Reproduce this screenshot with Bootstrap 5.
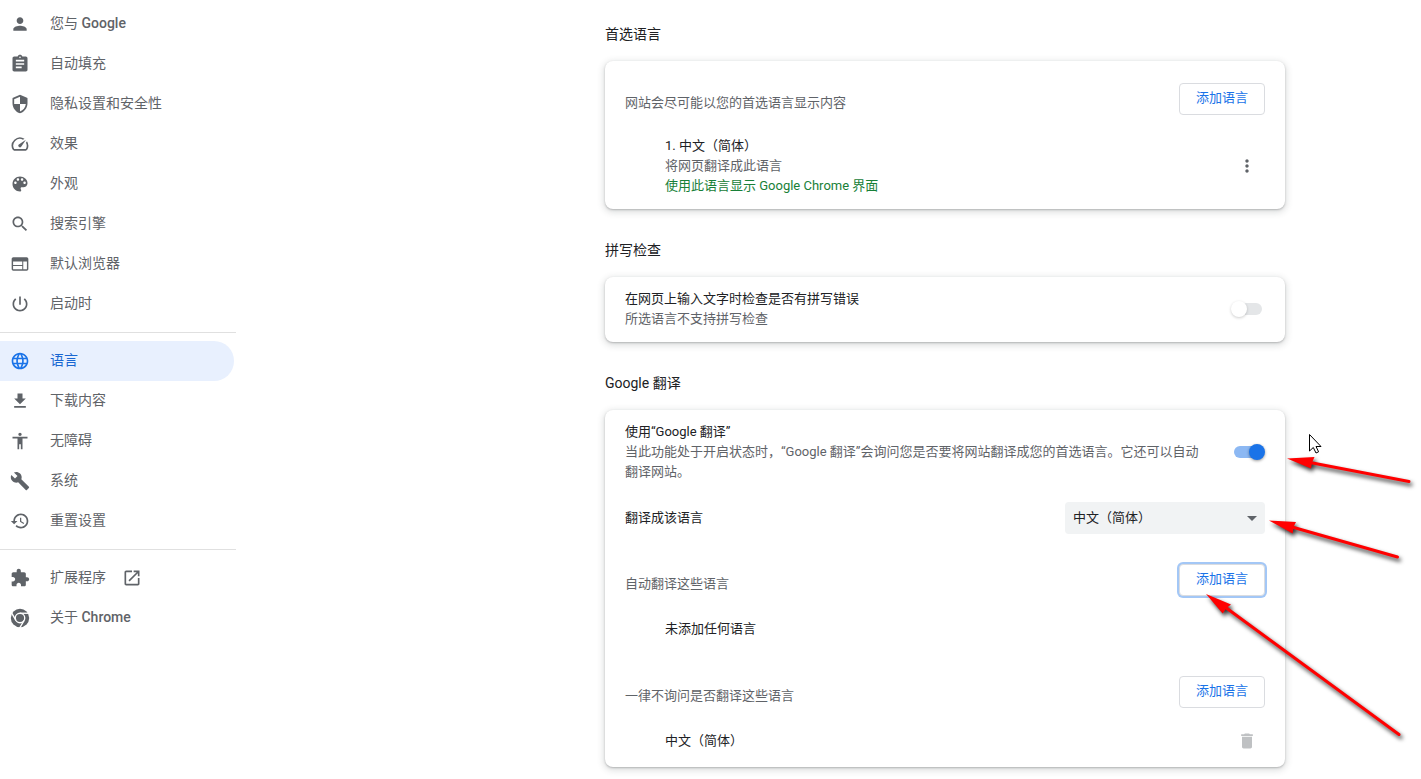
<!DOCTYPE html>
<html lang="zh-CN">
<head>
<meta charset="utf-8">
<meta name="viewport" content="width=device-width, initial-scale=1">
<title>设置 - 语言</title>
<link href="https://cdn.jsdelivr.net/npm/bootstrap@5.3.0/dist/css/bootstrap.min.css" rel="stylesheet">
<style>
  body { font-family: Roboto, "Noto Sans CJK SC", sans-serif; font-size: 13px; line-height: 20px; color: #202124; background: #fff; }
  .side-col { width: 469px; flex-shrink: 1; }
  .side-menu { width: 236px; padding-top: 4px; font-size: 14px; }
  .side-menu .nav-link { height: 40px; padding: 0 10px; gap: 20px; margin-right: 2px; color: #5f6368; border-radius: 0 20px 20px 0; }
  .side-menu .nav-link span { padding-bottom: 2px; }
  .side-menu .nav-link b { font-weight: 500; }
  .side-menu .nav-link.active { background: #e8f0fe; color: #1967d2; }
  .side-menu .nav-link.active svg { fill: #1a73e8; }
  .side-menu svg { width: 20px; height: 20px; fill: #5f6368; flex-shrink: 0; }
  .side-menu hr { margin: 8px 0; color: #000; opacity: .12; }
  .side-menu .open-new { margin-left: -4px; }
  .settings { max-width: 680px; padding-top: 24px; }
  .settings h2 { font-size: 14px; line-height: 20px; font-weight: 400; margin: 0; }
  .settings h2 + .card { margin-top: 17px; margin-bottom: 31px; }
  .settings .card { border: 0; border-radius: 8px; padding: 12px 20px 13px; color: #202124; box-shadow: 0 1px 2px rgba(60,64,67,.3), 0 2px 6px 2px rgba(60,64,67,.15); }
  .sub { color: #5f6368; }
  .in-use { color: #188038; }
  .list-head { height: 63px; padding-top: 10px; }
  .list-head .sub { padding-top: 6px; }
  .list-head.after-field { margin-top: 20px; }
  .list-entry { padding-left: 40px; padding-right: 8px; }
  .list-entry.single { padding-top: 2px; padding-bottom: 3px; }
  .btn-add { width: 86px; height: 32px; padding: 0 0 2px; font-size: 13px; line-height: 20px; color: #1a73e8; background: #fff; border: 1px solid #dadce0; border-radius: 4px; }
  .btn-add.focused { box-shadow: 0 0 0 2px rgba(26,115,232,.4); }
  .toggle { appearance: none; position: relative; flex-shrink: 0; width: 28px; height: 12px; margin: 0 3px; border-radius: 6px; background: #e4e6e8; }
  .toggle::before { content: ""; position: absolute; top: -2px; left: -3px; width: 16px; height: 16px; border-radius: 50%; background: #fff; box-shadow: 0 1px 3px rgba(0,0,0,.2); }
  .toggle:checked { background: #8cb8f3; }
  .toggle:checked::before { left: 15px; background: #1a73e8; box-shadow: 0 1px 3px rgba(0,0,0,.4); }
  .lang-select { width: 200px; height: 32px; padding: 0 24px 0 8px; font-size: 13px; line-height: 20px; color: #202124; border: 0; border-radius: 4px; background: #f1f3f4 url("data:image/svg+xml,%3Csvg xmlns='http://www.w3.org/2000/svg' viewBox='0 0 10 5'%3E%3Cpath d='M0 0h10L5 5z' fill='%235f6368'/%3E%3C/svg%3E") no-repeat right 8px center / 10px 5px; }
  .notes { top: 0; left: 0; width: 816px; height: 779px; pointer-events: none; }
  .notes .arrow { filter: drop-shadow(2px 3px 2px rgba(0,0,0,.8)); }
</style>
</head>
<body>
<div class="d-flex">
  <div class="side-col">
    <nav class="side-menu nav flex-column" aria-label="设置">
      <a class="nav-link d-flex align-items-center" href="#people"><svg viewBox="0 0 24 24"><path d="M12 12c2.210 0 4-1.790 4-4s-1.790-4-4-4-4 1.790-4 4 1.790 4 4 4zm0 2c-2.670 0-8 1.340-8 4v2h16v-2c0-2.660-5.330-4-8-4z"/></svg><span>您与 <b>Google</b></span></a>
      <a class="nav-link d-flex align-items-center" href="#autofill"><svg viewBox="0 0 24 24"><path d="M19 3h-4.180C14.400 1.840 13.300 1 12 1c-1.300 0-2.400.84-2.820 2H5c-1.100 0-2 .9-2 2v14c0 1.100.9 2 2 2h14c1.100 0 2-.9 2-2V5c0-1.100-.9-2-2-2zm-7 0c.55 0 1 .45 1 1s-.45 1-1 1-1-.45-1-1 .45-1 1-1zm2 14H7v-2h7v2zm3-4H7v-2h10v2zm0-4H7V7h10v2z"/></svg><span>自动填充</span></a>
      <a class="nav-link d-flex align-items-center" href="#privacy"><svg viewBox="0 0 24 24"><path d="M12 1L3.600 4.400Q3 4.700 3 5.400V11c0 5.550 3.840 10.740 9 12 5.160-1.260 9-6.450 9-12V5.400q0-.7-.6-1zm0 10.990h7c-.53 4.120-3.280 7.790-7 8.940V12H5V6.300l7-3.110v8.800z"/></svg><span>隐私设置和安全性</span></a>
      <a class="nav-link d-flex align-items-center" href="#performance"><svg viewBox="0 0 24 24"><path d="M20.380 8.570l-1.230 1.850a8 8 0 0 1-.22 7.580H5.070A8 8 0 0 1 15.580 6.850l1.850-1.230A10 10 0 0 0 3.350 19a2 2 0 0 0 1.720 1h13.850a2 2 0 0 0 1.740-1 10 10 0 0 0-.27-10.440zM10.590 15.410a2 2 0 0 0 2.830 0l5.660-8.490-8.490 5.660a2 2 0 0 0 0 2.830z"/></svg><span>效果</span></a>
      <a class="nav-link d-flex align-items-center" href="#appearance"><svg viewBox="0 0 24 24"><path d="M12 3c-4.970 0-9 4.030-9 9s4.030 9 9 9c.83 0 1.500-.67 1.500-1.500 0-.39-.15-.74-.39-1.010-.23-.26-.38-.61-.38-.99 0-.83.67-1.500 1.500-1.500H16c2.760 0 5-2.240 5-5 0-4.420-4.030-8-9-8zm-5.500 9c-.83 0-1.500-.67-1.500-1.500S5.670 9 6.500 9 8 9.670 8 10.500 7.330 12 6.500 12zm3-4C8.670 8 8 7.330 8 6.500S8.670 5 9.500 5s1.500.67 1.500 1.500S10.330 8 9.500 8zm5 0c-.83 0-1.500-.67-1.500-1.500S13.670 5 14.500 5s1.500.67 1.500 1.500S15.330 8 14.500 8zm3 4c-.83 0-1.500-.67-1.500-1.500S16.670 9 17.500 9s1.500.67 1.500 1.500-.67 1.500-1.500 1.500z"/></svg><span>外观</span></a>
      <a class="nav-link d-flex align-items-center" href="#search"><svg viewBox="0 0 24 24"><path d="M15.500 14h-.79l-.28-.27C15.410 12.590 16 11.110 16 9.500 16 5.910 13.090 3 9.500 3S3 5.910 3 9.500 5.910 16 9.500 16c1.610 0 3.090-.59 4.230-1.570l.27.28v.79l5 4.990L20.490 19l-4.990-5zm-6 0C7.010 14 5 11.990 5 9.500S7.010 5 9.500 5 14 7.010 14 9.500 11.990 14 9.500 14z"/></svg><span>搜索引擎</span></a>
      <a class="nav-link d-flex align-items-center" href="#browser"><svg viewBox="0 0 24 24"><path d="M20 4H4c-1.100 0-2 .9-2 2v12c0 1.100.9 2 2 2h16c1.100 0 2-.9 2-2V6c0-1.100-.9-2-2-2zm-5.300 14.400H3.700v-4h11v4zm0-5.200H3.700V9h11v4.200zm5.600 5.200h-4.400V9h4.400v9.400z"/></svg><span>默认浏览器</span></a>
      <a class="nav-link d-flex align-items-center" href="#startup"><svg viewBox="0 0 24 24"><path d="M13 3h-2v10h2V3zm4.830 2.170l-1.420 1.420C17.990 7.860 19 9.810 19 12c0 3.870-3.130 7-7 7s-7-3.130-7-7c0-2.190 1.010-4.140 2.580-5.420L6.170 5.170C4.230 6.820 3 9.260 3 12c0 4.970 4.030 9 9 9s9-4.030 9-9c0-2.740-1.230-5.180-3.170-6.830z"/></svg><span>启动时</span></a>
      <hr>
      <a class="nav-link active d-flex align-items-center" href="#languages" aria-current="page"><svg viewBox="0 0 24 24"><path d="M11.990 2C6.470 2 2 6.480 2 12s4.470 10 9.990 10C17.520 22 22 17.520 22 12S17.520 2 11.990 2zm6.930 6h-2.950c-.32-1.250-.78-2.450-1.380-3.560 1.840.63 3.370 1.910 4.330 3.560zM12 4.040c.83 1.200 1.480 2.530 1.910 3.960h-3.820c.43-1.430 1.080-2.760 1.910-3.960zM4.260 14C4.100 13.360 4 12.690 4 12s.1-1.360.26-2h3.380c-.08.66-.14 1.320-.14 2 0 .68.060 1.340.14 2H4.260zm.82 2h2.950c.32 1.250.78 2.450 1.380 3.560-1.840-.63-3.370-1.900-4.330-3.560zm2.950-8H5.080c.96-1.660 2.490-2.930 4.330-3.560C8.810 5.550 8.350 6.750 8.030 8zM12 19.960c-.83-1.200-1.480-2.530-1.910-3.960h3.820c-.43 1.430-1.080 2.760-1.910 3.960zM14.340 14H9.660c-.09-.66-.16-1.320-.16-2 0-.68.070-1.350.16-2h4.680c.09.65.16 1.320.16 2 0 .68-.07 1.340-.16 2zm.25 5.560c.6-1.110 1.060-2.310 1.380-3.560h2.950c-.96 1.650-2.490 2.930-4.330 3.560zM16.360 14c.08-.66.14-1.320.14-2 0-.68-.06-1.340-.14-2h3.380c.16.64.26 1.310.26 2s-.1 1.360-.26 2h-3.380z"/></svg><span>语言</span></a>
      <a class="nav-link d-flex align-items-center" href="#downloads"><svg viewBox="0 0 24 24"><path d="M5 20h14v-2H5v2zM19 9h-4V3H9v6H5l7 7 7-7z"/></svg><span>下载内容</span></a>
      <a class="nav-link d-flex align-items-center" href="#accessibility"><svg viewBox="0 0 24 24"><path d="M12 2c1.100 0 2 .9 2 2s-.9 2-2 2-2-.9-2-2 .9-2 2-2zm9 7h-6v13h-2v-6h-2v6H9V9H3V7h18v2z"/></svg><span>无障碍</span></a>
      <a class="nav-link d-flex align-items-center" href="#system"><svg viewBox="0 0 24 24"><path d="M22.700 19l-9.100-9.100c.9-2.300.4-5-1.500-6.900-2-2-5-2.400-7.400-1.300L9 6 6 9 1.600 4.700C.4 7.100.9 10.100 2.900 12.100c1.900 1.900 4.600 2.400 6.900 1.500l9.100 9.100c.4.4 1 .4 1.400 0l2.300-2.300c.5-.4.5-1.100.1-1.400z"/></svg><span>系统</span></a>
      <a class="nav-link d-flex align-items-center" href="#reset"><svg viewBox="0 0 24 24"><path d="M13 3c-4.970 0-9 4.030-9 9H1l3.890 3.890.07.14L9 12H6c0-3.870 3.130-7 7-7s7 3.130 7 7-3.130 7-7 7c-1.930 0-3.680-.79-4.940-2.060l-1.420 1.420C8.270 19.990 10.510 21 13 21c4.970 0 9-4.030 9-9s-4.030-9-9-9zm-1 5v5l4.280 2.540.72-1.210-3.500-2.080V8H12z"/></svg><span>重置设置</span></a>
      <hr>
      <a class="nav-link d-flex align-items-center" href="#extensions"><svg viewBox="0 0 24 24"><path d="M20.500 11H19V7c0-1.100-.9-2-2-2h-4V3.500C13 2.120 11.880 1 10.500 1S8 2.120 8 3.500V5H4c-1.100 0-1.990.9-1.990 2v3.800H3.500c1.490 0 2.700 1.210 2.700 2.700s-1.210 2.700-2.700 2.700H2V20c0 1.100.9 2 2 2h3.800v-1.500c0-1.490 1.210-2.700 2.700-2.700 1.490 0 2.700 1.210 2.700 2.700V22H17c1.100 0 2-.9 2-2v-4h1.500c1.380 0 2.500-1.120 2.500-2.500S21.880 11 20.500 11z"/></svg><span>扩展程序</span><svg class="open-new" viewBox="0 0 24 24"><path d="M19 19H5V5h7V3H5c-1.110 0-2 .9-2 2v14c0 1.100.89 2 2 2h14c1.100 0 2-.9 2-2v-7h-2v7zM14 3v2h3.590l-9.830 9.830 1.410 1.410L19 6.410V10h2V3h-7z"/></svg></a>
      <a class="nav-link d-flex align-items-center" href="#about"><svg viewBox="0 0 24 24"><circle cx="12" cy="12" r="11"/><g fill="none" stroke="#fff" stroke-width="1.600"><circle cx="12" cy="12" r="5.700"/><path d="M12 6.300h11"/><path d="M12 6.300h11" transform="rotate(120 12 12)"/><path d="M12 6.300h11" transform="rotate(240 12 12)"/></g></svg><span>关于 <b>Chrome</b></span></a>
    </nav>
  </div>

  <main class="flex-fill">
    <div class="settings position-relative mx-auto">
      <h2>首选语言</h2>
      <section class="card">
        <div class="list-head d-flex justify-content-between align-items-start">
          <div class="sub mt-1">网站会尽可能以您的首选语言显示内容</div>
          <button type="button" class="btn btn-add">添加语言</button>
        </div>
        <div class="list-entry d-flex justify-content-between align-items-center">
          <div>
            <div>1. 中文（简体）</div>
            <div class="sub">将网页翻译成此语言</div>
            <div class="in-use">使用此语言显示 Google Chrome 界面</div>
          </div>
          <button type="button" class="btn p-0 border-0 d-flex" aria-label="更多操作"><svg width="20" height="20" viewBox="0 0 24 24" fill="#5f6368"><path d="M12 8c1.100 0 2-.9 2-2s-.9-2-2-2-2 .9-2 2 .9 2 2 2zm0 2c-1.100 0-2 .9-2 2s.9 2 2 2 2-.9 2-2-.9-2-2-2zm0 6c-1.100 0-2 .9-2 2s.9 2 2 2 2-.9 2-2-.9-2-2-2z"/></svg></button>
        </div>
      </section>

      <h2>拼写检查</h2>
      <section class="card">
        <div class="d-flex justify-content-between align-items-center">
          <label for="spell">在网页上输入文字时检查是否有拼写错误<br><span class="sub">所选语言不支持拼写检查</span></label>
          <input type="checkbox" role="switch" class="toggle" id="spell">
        </div>
      </section>

      <h2>Google 翻译</h2>
      <section class="card">
        <div class="d-flex justify-content-between align-items-center">
          <label for="translate" class="pe-4 me-1">使用“Google 翻译”<br><span class="sub">当此功能处于开启状态时，“Google 翻译”会询问您是否要将网站翻译成您的首选语言。它还可以自动翻译网站。</span></label>
          <input type="checkbox" role="switch" class="toggle" id="translate" checked>
        </div>
        <div class="d-flex justify-content-between align-items-center mt-3 pt-1">
          <label for="target">翻译成该语言</label>
          <select class="form-select lang-select" id="target"><option>中文（简体）</option></select>
        </div>
        <div class="list-head after-field d-flex justify-content-between align-items-start">
          <div class="sub mt-1">自动翻译这些语言</div>
          <button type="button" class="btn btn-add focused">添加语言</button>
        </div>
        <div class="list-entry single">未添加任何语言</div>
        <div class="list-head d-flex justify-content-between align-items-start mt-4">
          <div class="sub mt-1">一律不询问是否翻译这些语言</div>
          <button type="button" class="btn btn-add">添加语言</button>
        </div>
        <div class="list-entry single d-flex justify-content-between align-items-center">
          <div>中文（简体）</div>
          <button type="button" class="btn p-0 border-0 d-flex" aria-label="移除"><svg width="20" height="20" viewBox="0 0 24 24" fill="#bfc1c3"><path d="M6 19c0 1.100.9 2 2 2h8c1.100 0 2-.9 2-2V7H6v12zM19 4h-3.500l-1-1h-5l-1 1H5v2h14V4z"/></svg></button>
        </div>
      </section>

      <!-- red pointer arrows and the mouse cursor -->
      <svg class="notes position-absolute" viewBox="605 0 816 779" aria-hidden="true">
        <g class="arrow" fill="#f00" stroke="#f00">
          <path stroke="none" d="M1287 458.500L1314.500 457L1312 462.500L1311 468.500Z"/>
          <path stroke-width="3" stroke-linecap="round" d="M1310 462.500L1409 481.500"/>
          <path stroke="none" d="M1269 520.500L1296 522L1293.500 527L1292.700 533.500Z"/>
          <path stroke-width="3" stroke-linecap="round" d="M1292 527L1397.500 557"/>
          <path stroke="none" d="M1206 594L1231 604.500L1226.500 608L1222.700 613.500Z"/>
          <path stroke-width="3" stroke-linecap="round" d="M1225 607L1399 734.500"/>
        </g>
        <path fill="#fff" stroke="#000" d="M1309.500 434.500v16.500l3.800-3.500 2.700 5.500 2.600-1.200-2.600-5.300h5z"/>
      </svg>
    </div>
  </main>
</div>
<script src="https://cdn.jsdelivr.net/npm/bootstrap@5.3.0/dist/js/bootstrap.bundle.min.js"></script>
</body>
</html>
